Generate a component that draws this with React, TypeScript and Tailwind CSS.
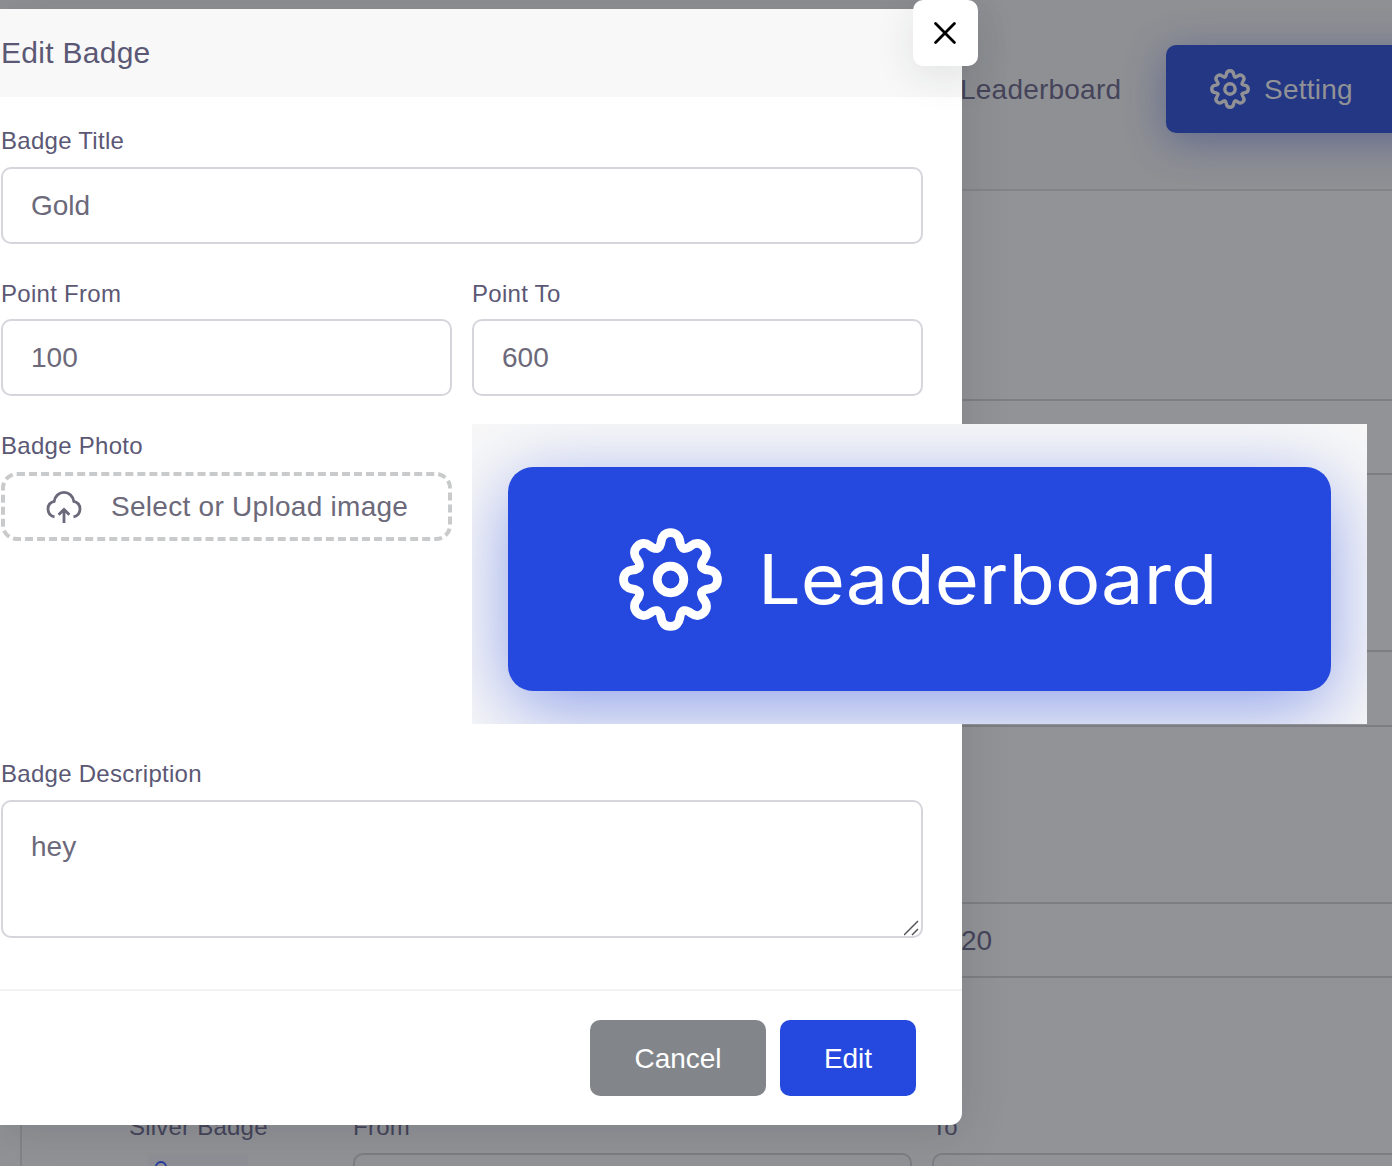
import React from "react";

const TEETH = [0, 45, 90, 135, 180, 225, 270, 315];

function Gear({ className, strokeWidth = 8.7 }: { className: string; strokeWidth?: number }) {
  return (
    <svg viewBox="-51 -51 102 102" className={className} fill="none" stroke="currentColor" strokeWidth={strokeWidth} strokeLinecap="round">
      <circle r="13.2" />
      {TEETH.map((angle) => (
        <path
          key={angle}
          transform={`rotate(${angle})`}
          d="M-12.9-31C-10.2-32.1-9.6-35-9.2-38.2C-8.6-42.5-5.6-46.5 0-46.5C5.6-46.5 8.6-42.5 9.2-38.2C9.6-35 10.2-32.1 12.9-31"
        />
      ))}
    </svg>
  );
}

function CloudUpload() {
  return (
    <svg viewBox="0 0 36 34" className="h-[34px] w-9 shrink-0" fill="none" stroke="currentColor" strokeWidth="2.8">
      <path d="M8.5 26.8C4.4 26 2 22.9 2 19C2 15 4.7 12.2 8.2 11.4C9 6 13 2.4 18 2.4S27 6 27.8 11.4C31.3 12.2 34 15 34 19C34 22.9 31.6 26 27.5 26.8" />
      <path d="M18 33V19.6M12.6 24.8L18 19.4L23.4 24.8" />
    </svg>
  );
}

function Field({ label, value }: { label: string; value: string }) {
  return (
    <label className="flex flex-1 flex-col justify-end">
      <span className="h-[41px] text-2xl leading-[30px] tracking-[0.28px] text-[#5b5875]">{label}</span>
      <input
        defaultValue={value}
        className="h-[77px] w-full rounded-[10px] border-2 border-[#d6d5dc] bg-white px-7 text-[28px] text-[#6c697a] outline-none"
      />
    </label>
  );
}

function Preview() {
  return (
    <div className="flex h-[300px] w-[895px] shrink-0 overflow-hidden bg-[#f8f8f8] pl-9 pt-[43px]">
      <div className="flex h-[224px] w-[823px] items-center rounded-[25px] bg-[#2549de] pl-[111px] text-white shadow-[0_18px_76px_rgba(37,73,222,0.5)]">
        <Gear className="size-[103px] shrink-0" />
        <span className="ml-9 origin-left scale-x-[1.098] font-['Inter',sans-serif] text-[69px] font-normal leading-none">
          Leaderboard
        </span>
      </div>
    </div>
  );
}

function Background() {
  return (
    <div className="flex h-full flex-col bg-[#929397] text-[#45445a]">
      <header className="flex h-[191px] shrink-0 border-b-2 border-[#838488] bg-[#8f9094] pt-[45px]">
        <span className="ml-[960px] w-[206px] shrink-0 text-[28px] leading-[90px] tracking-[0.22px]">Leaderboard</span>
        <div className="flex h-[88px] w-[280px] shrink-0 items-center rounded-[10px] bg-[#243784] pl-11 text-[#919296] shadow-[0_8px_40px_rgba(36,55,132,0.45)]">
          <Gear className="size-10" />
          <span className="ml-3.5 pt-0.5 text-[28px] tracking-[0.22px]">Setting</span>
        </div>
      </header>
      <div className="h-[208px] shrink-0" />
      <div className="h-[76px] shrink-0 border-y-2 border-[#7d7e83]" />
      <div className="h-[175px] shrink-0" />
      <div className="h-[77px] shrink-0 border-y-2 border-[#7d7e83]" />
      <div className="h-[175px] shrink-0" />
      <div className="h-[76px] shrink-0 border-y-2 border-[#7d7e83] pl-[961px] text-[28px] leading-[73px]">20</div>
      <div className="ml-5 flex h-[188px] shrink-0 border-l-2 border-[#838488] pt-[133px]">
        <div className="ml-[107px] w-[224px] shrink-0">
          <div className="h-[43px] text-2xl leading-8 tracking-[0.22px]">Silver Badge</div>
          <div className="ml-[19px] h-[60px] w-[100px] bg-[#8f9095] pl-[7px] pt-[7px] text-[#2438a0]">
            <svg viewBox="0 0 12 12" className="size-3" fill="none" stroke="currentColor" strokeWidth="1.8">
              <circle cx="6" cy="6" r="5" />
            </svg>
          </div>
        </div>
        <div className="w-[559px] shrink-0">
          <div className="h-[42px] text-2xl leading-8 tracking-[0.28px]">From</div>
          <div className="h-[76px] rounded-[10px] border-2 border-[#7d7e83]" />
        </div>
        <div className="ml-5 w-[559px] shrink-0">
          <div className="h-[42px] text-2xl leading-8 tracking-[0.28px]">To</div>
          <div className="h-[76px] rounded-[10px] border-2 border-[#7d7e83]" />
        </div>
      </div>
    </div>
  );
}

export default function App() {
  return (
    <div className="relative h-[1166px] w-[1392px] overflow-hidden font-['Liberation_Sans',Arial,sans-serif]">
      <Background />
      <div
        role="dialog"
        className="absolute left-0 top-[9px] flex h-[1116px] w-[962px] flex-col rounded-br-xl bg-white shadow-[0_8px_48px_rgba(34,41,47,0.16)]"
      >
        <div className="h-[88px] shrink-0 bg-[#f8f8f8] pl-px text-[30px] leading-[88px] tracking-[0.28px] text-[#5b5875]">
          Edit Badge
        </div>
        <button className="absolute -right-4 -top-[9px] flex h-[66px] w-[65px] items-center justify-center rounded-[10px] bg-white pb-px pr-px text-black shadow-[0_10px_40px_rgba(34,41,47,0.1)]">
          <svg viewBox="0 0 22 22" className="size-[22px]" fill="none" stroke="currentColor" strokeWidth="2.8" strokeLinecap="round">
            <path d="M1.6 1.6L20.4 20.4M20.4 1.6L1.6 20.4" />
          </svg>
        </button>
        <div className="flex flex-col pl-px pr-[39px]">
          <div className="flex h-[147px]">
            <Field label="Badge Title" value="Gold" />
          </div>
          <div className="flex h-[152px] gap-5 [&_span]:h-10">
            <Field label="Point From" value="100" />
            <Field label="Point To" value="600" />
          </div>
          <div className="flex h-[363px] gap-5">
            <div className="w-[451px] shrink-0 pt-[35px]">
              <div className="h-[41px] text-2xl leading-[30px] tracking-[0.28px] text-[#5b5875]">Badge Photo</div>
              <div className="flex h-[69px] items-center rounded-2xl border-4 border-dashed border-[#c9cacb] pl-[41px] text-[#6c697a]">
                <CloudUpload />
                <span className="ml-[29px] whitespace-nowrap text-[28px] tracking-[0.28px]">Select or Upload image</span>
              </div>
            </div>
            <div className="pt-7">
              <Preview />
            </div>
          </div>
          <label className="flex flex-col">
            <span className="h-[41px] text-2xl leading-[30px] tracking-[0.28px] text-[#5b5875]">Badge Description</span>
            <span className="relative flex">
              <textarea
                defaultValue="hey"
                className="h-[138px] w-full resize-none rounded-[10px] border-2 border-[#d6d5dc] px-7 pt-[25px] text-[28px] leading-10 text-[#6c697a] outline-none"
              />
              <svg viewBox="0 0 16 16" className="absolute bottom-0.5 right-[3px] size-4" fill="none" stroke="#55555a" strokeWidth="1.5">
                <path d="M0 15L14 1M8 15L14 9" />
              </svg>
            </span>
          </label>
        </div>
        <div className="mt-auto flex h-[136px] shrink-0 justify-end gap-3.5 border-t-2 border-[#f2f2f3] pr-[46px] pt-[29px] text-[28px] text-white">
          <button className="h-[76px] w-44 rounded-[10px] bg-[#82868b] pt-0.5">Cancel</button>
          <button className="h-[76px] w-[136px] rounded-[10px] bg-[#2549de] pt-0.5">Edit</button>
        </div>
      </div>
    </div>
  );
}
